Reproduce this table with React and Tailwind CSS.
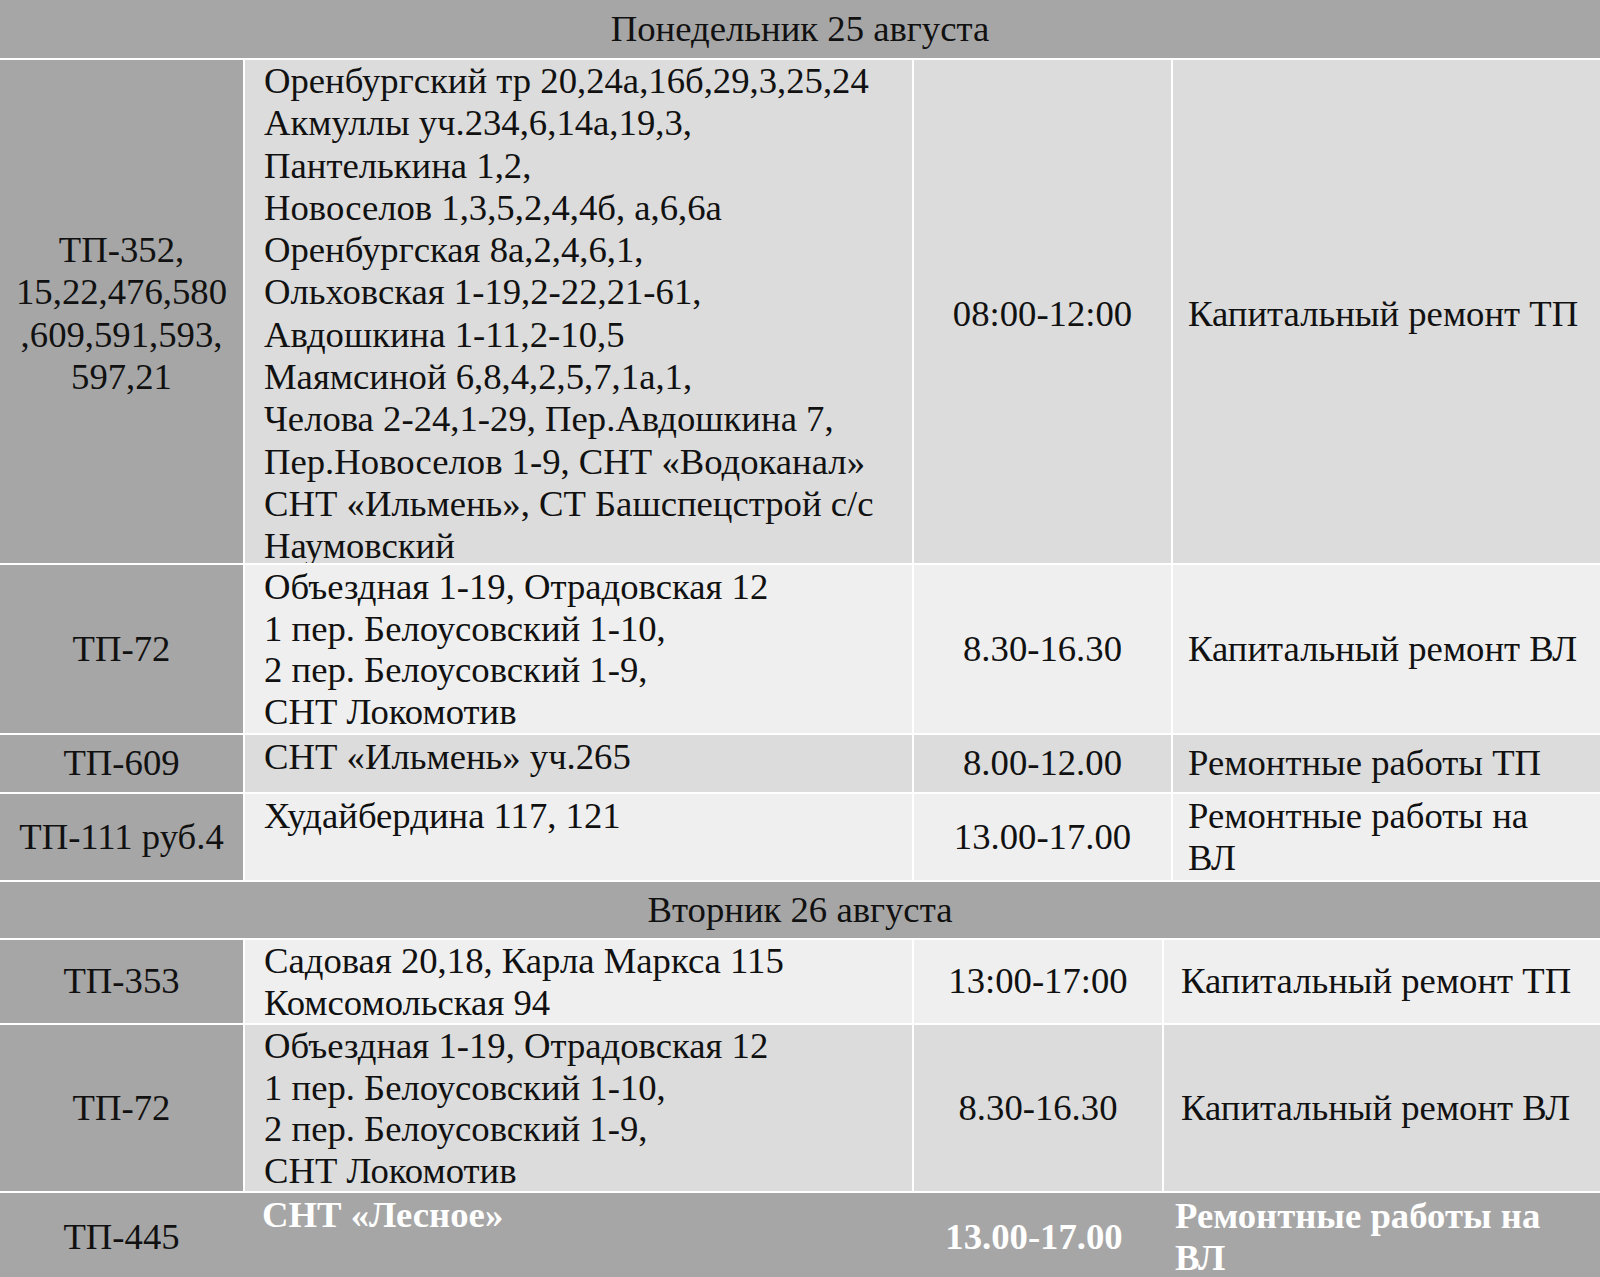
const serif = { fontFamily: '"Liberation Serif", "Times New Roman", serif' };

const MONDAY = [
  {
    tp: ["ТП-352,", "15,22,476,580", ",609,591,593,", "597,21"],
    addr: [
      "Оренбургский тр 20,24а,16б,29,3,25,24",
      "Акмуллы уч.234,6,14а,19,3,",
      "Пантелькина 1,2,",
      "Новоселов 1,3,5,2,4,4б, а,6,6а",
      "Оренбургская 8а,2,4,6,1,",
      "Ольховская 1-19,2-22,21-61,",
      "Авдошкина 1-11,2-10,5",
      "Маямсиной 6,8,4,2,5,7,1а,1,",
      "Челова 2-24,1-29, Пер.Авдошкина 7,",
      "Пер.Новоселов 1-9, СНТ «Водоканал»",
      "СНТ «Ильмень», СТ Башспецстрой с/с",
      "Наумовский",
    ],
    time: "08:00-12:00",
    work: ["Капитальный ремонт ТП"],
    h: "h-[503px]",
    bg: "bg-[#dcdcdc]",
    pt: "pt-0",
    clip: true,
  },
  {
    tp: ["ТП-72"],
    addr: ["Объездная 1-19, Отрадовская 12", "1 пер. Белоусовский 1-10,", "2 пер. Белоусовский 1-9,", "СНТ Локомотив"],
    time: "8.30-16.30",
    work: ["Капитальный ремонт ВЛ"],
    h: "h-[168px]",
    bg: "bg-[#efefef]",
    pt: "pt-[1px]",
    lh: "leading-[41.6px]",
  },
  {
    tp: ["ТП-609"],
    addr: ["СНТ «Ильмень» уч.265"],
    time: "8.00-12.00",
    work: ["Ремонтные работы ТП"],
    h: "h-[57px]",
    bg: "bg-[#dcdcdc]",
    pt: "pt-px",
  },
  {
    tp: ["ТП-111 руб.4"],
    addr: ["Худайбердина 117, 121"],
    time: "13.00-17.00",
    work: ["Ремонтные работы на", "ВЛ"],
    h: "h-[86px]",
    bg: "bg-[#efefef]",
    pt: "pt-px",
  },
];

const TUESDAY = [
  {
    tp: ["ТП-353"],
    addr: ["Садовая 20,18, Карла Маркса 115", "Комсомольская 94"],
    time: "13:00-17:00",
    work: ["Капитальный ремонт ТП"],
    h: "h-[83px]",
    bg: "bg-[#efefef]",
    pt: "pt-0",
    lh: "leading-[41.5px]",
  },
  {
    tp: ["ТП-72"],
    addr: ["Объездная 1-19, Отрадовская 12", "1 пер. Белоусовский 1-10,", "2 пер. Белоусовский 1-9,", "СНТ Локомотив"],
    time: "8.30-16.30",
    work: ["Капитальный ремонт ВЛ"],
    h: "h-[166px]",
    bg: "bg-[#dcdcdc]",
    pt: "pt-0",
    lh: "leading-[41.5px]",
  },
  {
    tp: ["ТП-445"],
    addr: ["СНТ «Лесное»"],
    time: "13.00-17.00",
    work: ["Ремонтные работы на", "ВЛ"],
    h: "h-[88px]",
    bg: "bg-[#a6a6a6]",
    pt: "pt-px",
    bold: true,
  },
];

function Lines({ lines }) {
  return lines.map((l, i) => (
    <div key={i} className="whitespace-nowrap">
      {l}
    </div>
  ));
}

function Row({ r, cols, workPad }) {
  const ink = r.bold ? "font-bold text-white" : "text-[#111]";
  return (
    <div className={`grid ${cols} ${r.bold ? "gap-x-0" : "gap-x-[2px]"} ${r.h} shrink-0 ${r.clip ? "overflow-hidden" : ""}`}>
      <div className="flex flex-col items-center justify-center bg-[#a6a6a6] text-center text-[#111]">
        <Lines lines={r.tp} />
      </div>
      <div className={`${r.bg} ${ink} ${r.pt} ${r.lh || ""} pl-[19px]`}>
        <Lines lines={r.addr} />
      </div>
      <div className={`${r.bg} ${ink} flex items-center justify-center`}>{r.time}</div>
      <div className={`${r.bg} ${ink} ${workPad} flex flex-col justify-center`}>
        <Lines lines={r.work} />
      </div>
    </div>
  );
}

function DayHeader({ children, h }) {
  return (
    <div className={`flex ${h} shrink-0 items-center justify-center bg-[#a6a6a6] text-[#111]`}>
      {children}
    </div>
  );
}

export default function App() {
  return (
    <div className="flex w-[1600px] flex-col gap-y-[2px] bg-white text-[36.7px] leading-[42.3px]" style={serif}>
      <DayHeader h="h-[58px]">Понедельник 25 августа</DayHeader>
      {MONDAY.map((r, i) => (
        <Row key={i} r={r} cols="grid-cols-[243px_667px_257px_1fr]" workPad="pl-[15px]" />
      ))}
      <DayHeader h="h-[56px]">Вторник 26 августа</DayHeader>
      {TUESDAY.map((r, i) => (
        <Row key={i} r={r} cols="grid-cols-[243px_667px_248px_1fr]" workPad="pl-[17px]" />
      ))}
    </div>
  );
}
